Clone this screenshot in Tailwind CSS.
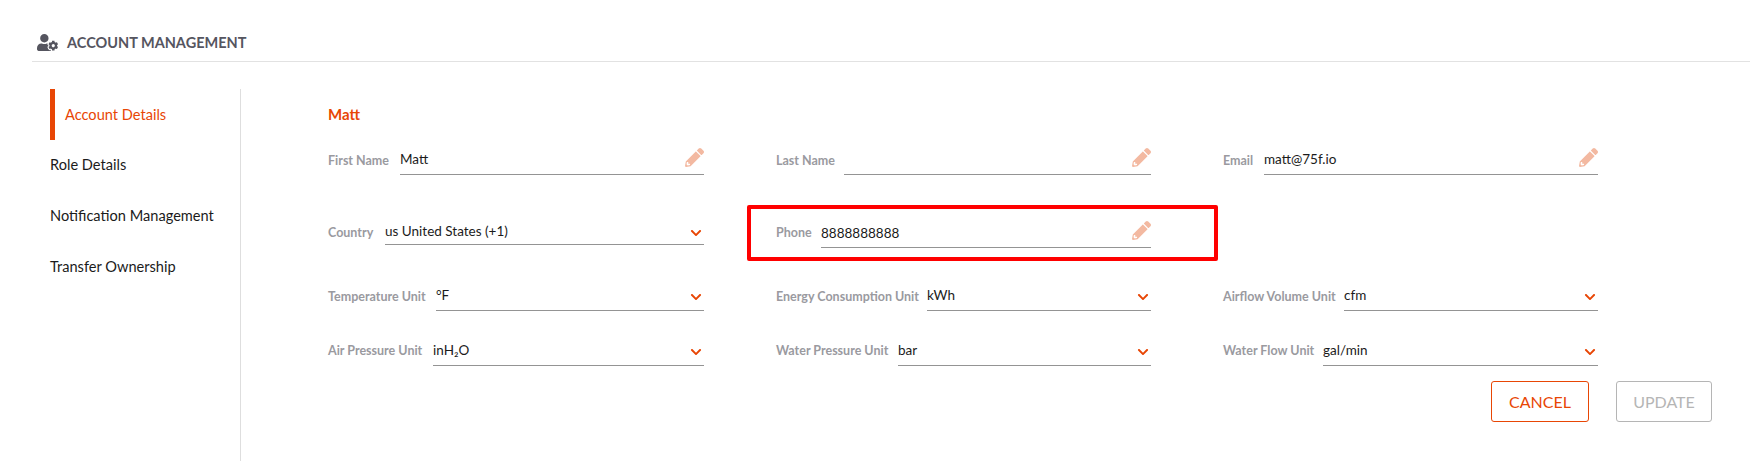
<!DOCTYPE html>
<html lang="en">

<head>
  <meta charset="UTF-8">
  <title>Account Management</title>
  <script src="https://cdn.jsdelivr.net/npm/@tailwindcss/browser@4"></script>
</head>

<body class="bg-white font-['Lato',sans-serif] text-[13.5px] text-[#1b1b1b] h-[461px] overflow-hidden relative">
  <svg class="hidden">
    <symbol id="pencil" viewBox="0 0 512 512"><path fill="currentColor" d="M497.9 142.1l-46.1 46.1c-4.7 4.7-12.3 4.7-17 0l-111-111c-4.7-4.7-4.7-12.3 0-17l46.1-46.1c18.7-18.7 49.1-18.7 67.9 0l60.1 60.1c18.8 18.7 18.8 49.1 0 67.9zM284.2 99.8L21.6 362.4.4 483.9c-2.9 16.4 11.4 30.6 27.8 27.8l121.5-21.3 262.6-262.6c4.7-4.7 4.7-12.3 0-17l-111-111c-4.8-4.7-12.4-4.7-17.1 0zM88 424h48v36.3l-64.5 11.3-31.1-31.1L51.7 376H88v48z"/></symbol>
    <symbol id="chevron" viewBox="0 0 448 512"><path fill="currentColor" d="M207.029 381.476L12.686 187.132c-9.373-9.373-9.373-24.569 0-33.941l22.667-22.667c9.357-9.357 24.522-9.375 33.901-.04L224 284.505l154.745-154.021c9.379-9.335 24.544-9.317 33.901.04l22.667 22.667c9.373 9.373 9.373 24.569 0 33.941L240.971 381.476c-9.373 9.372-24.569 9.372-33.942 0z"/></symbol>
  </svg>

  <!-- page header -->
  <header class="ml-[32px] h-[62px] border-b border-[#e2e2e2] flex items-center gap-[9px] pl-[5px] pt-[24px]">
    <svg class="w-[21px] h-[17px] text-[#55555f]" viewBox="0 0 640 512"><path fill="currentColor" d="M610.5 373.3c2.6-14.1 2.6-28.5 0-42.6l25.8-14.9c3-1.7 4.3-5.2 3.3-8.5-6.7-21.6-18.2-41.2-33.2-57.4-2.3-2.5-6-3.1-9-1.4l-25.8 14.9c-10.9-9.3-23.4-16.5-36.9-21.3v-29.8c0-3.4-2.4-6.4-5.7-7.1-22.3-5-45-4.8-66.2 0-3.3.7-5.7 3.7-5.7 7.1v29.8c-13.5 4.8-26 12-36.9 21.3l-25.8-14.9c-2.9-1.7-6.7-1.1-9 1.4-15 16.2-26.5 35.8-33.2 57.4-1 3.3.4 6.8 3.3 8.5l25.8 14.9c-2.6 14.1-2.6 28.5 0 42.6l-25.8 14.9c-3 1.7-4.3 5.2-3.3 8.5 6.7 21.6 18.2 41.1 33.2 57.4 2.3 2.5 6 3.1 9 1.4l25.8-14.9c10.9 9.3 23.4 16.5 36.9 21.3v29.8c0 3.4 2.4 6.4 5.7 7.1 22.3 5 45 4.8 66.2 0 3.3-.7 5.7-3.7 5.7-7.1v-29.8c13.5-4.8 26-12 36.9-21.3l25.8 14.9c2.9 1.7 6.7 1.1 9-1.4 15-16.2 26.5-35.8 33.2-57.4 1-3.3-.4-6.8-3.3-8.5l-25.8-14.9zM496 400.5c-26.8 0-48.5-21.8-48.5-48.5s21.8-48.5 48.5-48.5 48.5 21.8 48.5 48.5-21.7 48.5-48.5 48.5zM224 256c70.7 0 128-57.3 128-128S294.7 0 224 0 96 57.3 96 128s57.3 128 128 128zm201.2 226.5c-2.3-1.2-4.6-2.6-6.8-3.9l-7.9 4.6c-6 3.4-12.8 5.3-19.6 5.3-10.9 0-21.4-4.6-28.9-12.6-18.3-19.8-32.3-43.9-40.2-69.6-5.5-17.7 1.9-36.4 17.9-45.7l7.9-4.6c-.1-2.6-.1-5.2 0-7.8l-7.9-4.6c-16-9.2-23.4-28-17.9-45.7.9-2.9 2.2-5.8 3.2-8.7-3.8-.3-7.5-1.2-11.4-1.2h-16.7c-22.2 10.2-46.9 16-72.9 16s-50.6-5.8-72.9-16h-16.7C60.2 288 0 348.2 0 422.4V464c0 26.5 21.5 48 48 48h352c10.1 0 19.5-3.2 27.2-8.5-1.2-3.8-2-7.7-2-11.8v-9.2z"/></svg>
    <h1 class="text-[14.5px] font-bold text-[#55555f]">ACCOUNT MANAGEMENT</h1>
  </header>

  <div class="flex mt-[27px]">
    <!-- side menu -->
    <nav class="w-[241px] h-[372px] pl-[50px] border-r border-[#dedede] text-[14.6px]">
      <a class="h-[51px] flex items-center border-l-[5px] border-[#e84605] pl-[10px] text-[#e84605]">Account Details</a>
      <a class="h-[51px] flex items-center pb-[2px]">Role Details</a>
      <a class="h-[51px] flex items-center pb-[1px]">Notification Management</a>
      <a class="h-[51px] flex items-center pb-[1px]">Transfer Ownership</a>
    </nav>

    <!-- form -->
    <main class="pl-[88px] pt-[16px]">
      <h2 class="text-[15px] leading-[18px] font-bold text-[#e84605] -ml-[1px]">Matt</h2>

      <div class="grid grid-cols-[375px_375px_375px] gap-x-[72px] mt-[20px] text-[12.5px]">
        <div class="flex items-end h-[32px]">
          <label class="font-bold text-[#9a9a9f] -ml-[1px] w-[72px] pb-[4px]">First Name</label>
          <div class="flex-1 h-full border-b border-[#949494] flex items-center justify-between text-[13.5px]"><span class="pt-[2px]">Matt</span><svg class="w-[19px] h-[19px] text-[#f3b9a1] mb-[3px]"><use href="#pencil"/></svg></div>
        </div>
        <div class="flex items-end h-[32px]">
          <label class="font-bold text-[#9a9a9f] w-[68px] pb-[4px]">Last Name</label>
          <div class="flex-1 h-full border-b border-[#949494] flex items-center justify-end text-[13.5px]"><svg class="w-[19px] h-[19px] text-[#f3b9a1] mb-[3px]"><use href="#pencil"/></svg></div>
        </div>
        <div class="flex items-end h-[32px]">
          <label class="font-bold text-[#9a9a9f] w-[41px] pb-[4px]">Email</label>
          <div class="flex-1 h-full border-b border-[#949494] flex items-center justify-between text-[13.5px]"><span class="pt-[2px]">matt@75f.io</span><svg class="w-[19px] h-[19px] text-[#f3b9a1] mb-[3px]"><use href="#pencil"/></svg></div>
        </div>
      </div>

      <div class="grid grid-cols-[375px_375px_375px] gap-x-[72px] mt-[38px] text-[12.5px]">
        <div class="flex items-end h-[32px]">
          <label class="font-bold text-[#9a9a9f] -ml-[1px] w-[57px] pb-[2px]">Country</label>
          <div class="flex-1 h-full border-b border-[#949494] flex items-center justify-between text-[13.5px]"><span class="pt-[5px]">us United States (+1)</span><svg class="w-[12px] h-[12px] text-[#e84605] mr-[2px] mt-[9px]"><use href="#chevron"/></svg></div>
        </div>
        <div class="flex items-end h-[32px] mt-[3px]">
          <label class="font-bold text-[#9a9a9f] w-[45px] pb-[5px]">Phone</label>
          <div class="flex-1 h-full border-b border-[#949494] flex items-center justify-between text-[13.5px]"><span class="pt-[3px]">8888888888</span><svg class="w-[19px] h-[19px] text-[#f3b9a1] mb-[3px]"><use href="#pencil"/></svg></div>
        </div>
      </div>

      <div class="grid grid-cols-[375px_375px_375px] gap-x-[72px] mt-[31px] text-[12.5px]">
        <div class="flex items-end h-[32px]">
          <label class="font-bold text-[#9a9a9f] -ml-[1px] w-[108px] pb-[4px]">Temperature Unit</label>
          <div class="flex-1 h-full border-b border-[#949494] flex items-center justify-between text-[13.5px]"><span class="pt-[2px]">°F</span><svg class="w-[12px] h-[12px] text-[#e84605] mr-[2px] mt-[5px]"><use href="#chevron"/></svg></div>
        </div>
        <div class="flex items-end h-[32px]">
          <label class="font-bold text-[#9a9a9f] w-[151px] pb-[4px]">Energy Consumption Unit</label>
          <div class="flex-1 h-full border-b border-[#949494] flex items-center justify-between text-[13.5px]"><span class="pt-[2px]">kWh</span><svg class="w-[12px] h-[12px] text-[#e84605] mr-[2px] mt-[5px]"><use href="#chevron"/></svg></div>
        </div>
        <div class="flex items-end h-[32px]">
          <label class="font-bold text-[#9a9a9f] w-[121px] pb-[4px]">Airflow Volume Unit</label>
          <div class="flex-1 h-full border-b border-[#949494] flex items-center justify-between text-[13.5px]"><span class="pt-[2px]">cfm</span><svg class="w-[12px] h-[12px] text-[#e84605] mr-[2px] mt-[5px]"><use href="#chevron"/></svg></div>
        </div>
      </div>

      <div class="grid grid-cols-[375px_375px_375px] gap-x-[72px] mt-[23px] text-[12.5px]">
        <div class="flex items-end h-[32px]">
          <label class="font-bold text-[#9a9a9f] -ml-[1px] w-[105px] pb-[5px]">Air Pressure Unit</label>
          <div class="flex-1 h-full border-b border-[#949494] flex items-center justify-between text-[13.5px]"><span class="pt-[2px]">inH₂O</span><svg class="w-[12px] h-[12px] text-[#e84605] mr-[2px] mt-[4px]"><use href="#chevron"/></svg></div>
        </div>
        <div class="flex items-end h-[32px]">
          <label class="font-bold text-[#9a9a9f] w-[122px] pb-[5px]">Water Pressure Unit</label>
          <div class="flex-1 h-full border-b border-[#949494] flex items-center justify-between text-[13.5px]"><span class="pt-[2px]">bar</span><svg class="w-[12px] h-[12px] text-[#e84605] mr-[2px] mt-[4px]"><use href="#chevron"/></svg></div>
        </div>
        <div class="flex items-end h-[32px]">
          <label class="font-bold text-[#9a9a9f] w-[100px] pb-[5px]">Water Flow Unit</label>
          <div class="flex-1 h-full border-b border-[#949494] flex items-center justify-between text-[13.5px]"><span class="pt-[2px]">gal/min</span><svg class="w-[12px] h-[12px] text-[#e84605] mr-[2px] mt-[4px]"><use href="#chevron"/></svg></div>
        </div>
      </div>

      <div class="flex justify-end gap-[27px] mt-[15px] w-[1383px]">
        <button class="w-[98px] h-[41px] border border-[#e84605] rounded-[3px] text-[16px] text-[#e84605]">CANCEL</button>
        <button class="w-[96px] h-[41px] border border-[#b5b5b5] rounded-[3px] text-[16px] text-[#b5b5b5]">UPDATE</button>
      </div>
    </main>
  </div>

  <!-- annotation over the phone field -->
  <div class="absolute left-[747px] top-[205px] w-[471px] h-[56px] border-[4px] border-[#ff0000] rounded-[2px]"></div>
</body>

</html>
